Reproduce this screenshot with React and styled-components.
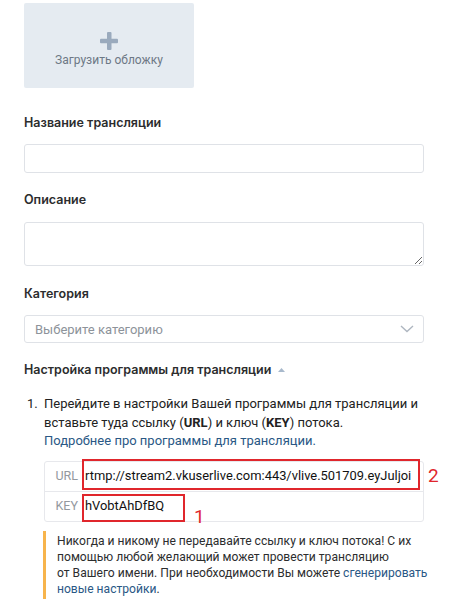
import React from "react";
import styled, { createGlobalStyle } from "styled-components";

const Global = createGlobalStyle`
  html, body { margin: 0; padding: 0; background: #fff; }
  body { font-family: Roboto, "Noto Sans", Arial, sans-serif; color: #000; -webkit-font-smoothing: antialiased; }
  * { box-sizing: border-box; }
`;

const Page = styled.div`
  width: 449px;
  height: 600px;
  overflow: hidden;
  padding: 3px 25px 0 24px;
  position: relative;
`;

const Cover = styled.div`
  width: 170px;
  height: 85px;
  background: #e5ebf1;
  border-radius: 2px;
  display: flex;
  flex-direction: column;
  align-items: center;
  justify-content: center;
  gap: 3px;
  padding-top: 8px;
`;

const CoverText = styled.div`
  font-size: 12px;
  color: #6d7885;
`;

const Label = styled.div`
  font-family: Inter, Roboto, sans-serif;
  font-weight: 600;
  font-size: 12.5px;
  line-height: 16px;
  color: #2c2d2e;
  margin-top: ${(p) => p.$mt}px;
  display: flex;
  align-items: center;
  gap: 7px;
`;

const Input = styled.div`
  margin-top: ${(p) => p.$mt}px;
  width: 400px;
  height: ${(p) => p.$h}px;
  border: 1px solid #dfe2e7;
  border-radius: 3px;
  background: #fff;
`;

const TextArea = styled.textarea`
  display: block;
  margin-top: 14px;
  width: 400px;
  height: 44px;
  border: 1px solid #dfe2e7;
  border-radius: 3px;
  background: #fff;
  resize: vertical;
  outline: none;
`;

const Select = styled.div`
  margin-top: 13px;
  width: 400px;
  height: 28px;
  border: 1px solid #dfe2e7;
  border-radius: 3px;
  display: flex;
  align-items: center;
  justify-content: space-between;
  padding: 0 9px 0 10px;
  font-size: 13px;
  color: #8d939a;
`;

const Steps = styled.div`
  margin-top: 17px;
  display: flex;
  padding-left: 3px;
  font-size: 13px;
  line-height: 18.5px;
  color: #222;
`;

const StepNum = styled.div`
  width: 17px;
  flex: none;
`;

const StepBody = styled.div`
  flex: 1;
`;

const Link = styled.span`
  color: #2a5885;
`;

const Table = styled.div`
  margin-top: 10px;
  width: 380px;
  border: 1px solid #e7e8ec;
  border-radius: 3px;
  position: relative;
`;

const Row = styled.div`
  display: flex;
  align-items: center;
  height: ${(p) => p.$h}px;
  & + & { border-top: 1px solid #e7e8ec; }
`;

const RowLabel = styled.div`
  width: 38px;
  flex: none;
  text-align: right;
  padding-right: 5px;
  font-size: 12.5px;
  color: #93989e;
`;

const RowValue = styled.div`
  font-size: 12.9px;
  color: #111;
  padding-left: 2px;
  white-space: nowrap;
`;

const RedBox = styled.div`
  position: absolute;
  border: 2px solid #e0262c;
  left: ${(p) => p.$l}px;
  top: ${(p) => p.$t}px;
  width: ${(p) => p.$w}px;
  height: ${(p) => p.$h}px;
`;

const RedNum = styled.div`
  position: absolute;
  left: ${(p) => p.$l}px;
  top: ${(p) => p.$t}px;
  color: #e0262c;
  font-size: 19px;
  font-family: Roboto, sans-serif;
`;

const Warning = styled.div`
  margin-top: 9px;
  margin-left: 19px;
  border-left: 3px solid #f7b44c;
  padding: 2px 0 2px 11px;
  font-size: 12.1px;
  line-height: 16px;
  color: #2c2d2e;
  width: 388px;
`;

export default function App() {
  return (
    <Page>
      <Global />
      <Cover>
        <svg width="18" height="18" viewBox="0 0 18 18">
          <rect x="7" y="0" width="4.5" height="18" rx="1" fill="#9aaabd" />
          <rect x="0" y="6.8" width="18" height="4.5" rx="1" fill="#9aaabd" />
        </svg>
        <CoverText>Загрузить обложку</CoverText>
      </Cover>

      <Label $mt={27}>Название трансляции</Label>
      <Input $mt={13} $h={29} />

      <Label $mt={19}>Описание</Label>
      <TextArea />

      <Label $mt={20}>Категория</Label>
      <Select>
        <span>Выберите категорию</span>
        <svg width="14" height="8" viewBox="0 0 14 8">
          <path d="M1 1l6 5.5L13 1" fill="none" stroke="#aeb6c0" strokeWidth="1.4" />
        </svg>
      </Select>

      <Label $mt={19}>
        Настройка программы для трансляции
        <svg width="7" height="4" viewBox="0 0 7 4">
          <path d="M0 4L3.5 0L7 4z" fill="#a8b9cc" />
        </svg>
      </Label>

      <Steps>
        <StepNum>1.</StepNum>
        <StepBody>
          Перейдите в настройки Вашей программы для трансляции и вставьте туда ссылку (<b>URL</b>) и ключ (<b>KEY</b>) потока.
          <br />
          <Link>Подробнее про программы для трансляции.</Link>
          <Table>
            <Row $h={29}>
              <RowLabel>URL</RowLabel>
              <RowValue>rtmp://stream2.vkuserlive.com:443/vlive.501709.eyJuljoi</RowValue>
            </Row>
            <Row $h={30}>
              <RowLabel>KEY</RowLabel>
              <RowValue>hVobtAhDfBQ</RowValue>
            </Row>
            <RedBox $l={37} $t={-3} $w={338} $h={31} />
            <RedNum $l={383} $t={5}>2</RedNum>
            <RedBox $l={37} $t={32} $w={103} $h={28} />
            <RedNum $l={149} $t={46}>1</RedNum>
          </Table>
        </StepBody>
      </Steps>

      <Warning>
        Никогда и никому не передавайте ссылку и ключ потока! С их помощью любой желающий может провести трансляцию от{"\u00A0"}Вашего{"\u00A0"}имени. При необходимости Вы можете <Link>сгенерировать новые настройки</Link>.
      </Warning>
    </Page>
  );
}
